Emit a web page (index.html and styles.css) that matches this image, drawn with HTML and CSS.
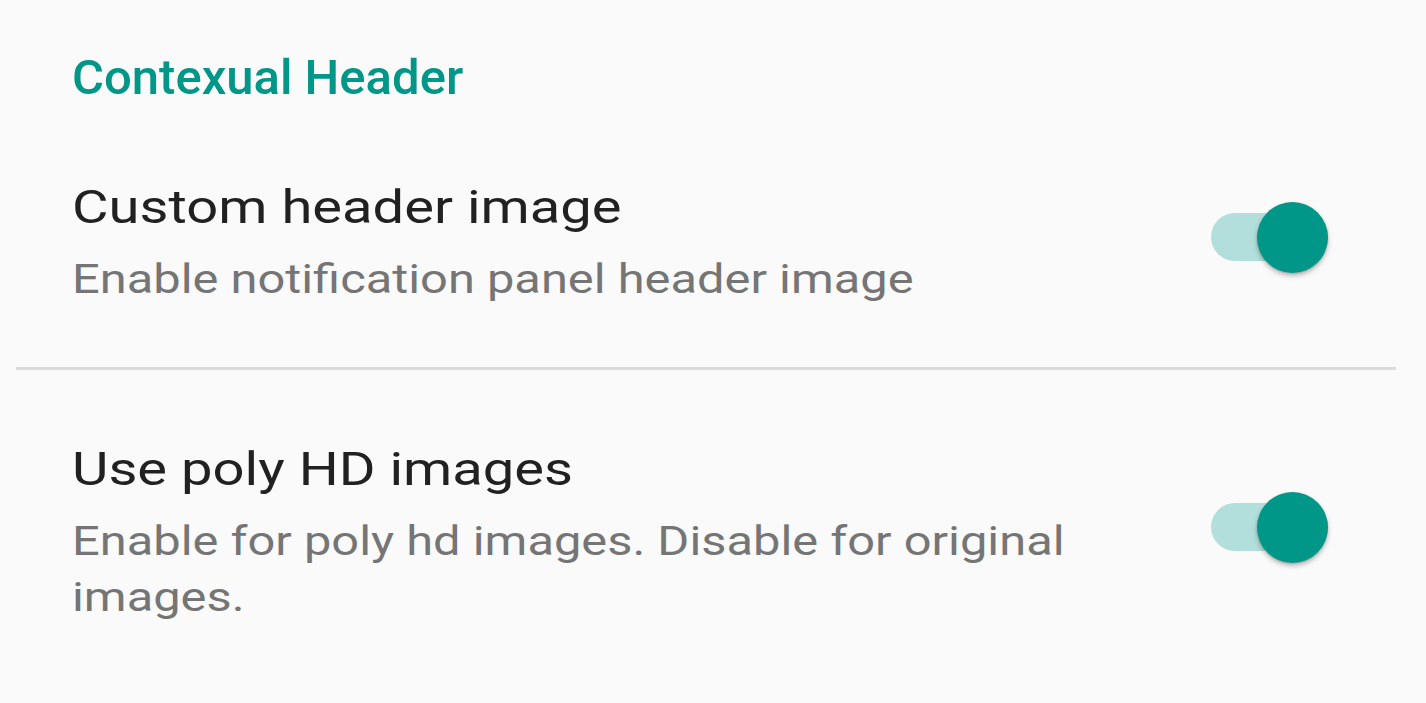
FILE: index.html
```html
<!DOCTYPE html>
<html>
<head>
<meta charset="utf-8">
<link rel="stylesheet" href="styles.css">
</head>
<body>
<div class="screen">
  <div class="category">Contexual Header</div>
  <div class="pref">
    <div class="pref-text">
      <div class="pref-title">Custom header image</div>
      <div class="pref-summary">Enable notification panel header image</div>
    </div>
    <div class="switch"><span class="track"></span><span class="thumb"></span></div>
  </div>
  <div class="divider"></div>
  <div class="pref">
    <div class="pref-text">
      <div class="pref-title">Use poly HD images</div>
      <div class="pref-summary">Enable for poly hd images. Disable for original images.</div>
    </div>
    <div class="switch"><span class="track"></span><span class="thumb"></span></div>
  </div>
</div>
</body>
</html>
```

FILE: styles.css
```css
html, body {
  margin: 0;
  padding: 0;
  background: #fafafa;
}
body {
  font-family: Roboto, "Noto Sans", sans-serif;
  width: 1426px;
  height: 703px;
  overflow: hidden;
}
.screen {
  display: flex;
  flex-direction: column;
}
.category {
  padding: 50px 0 0 72px;
  font-size: 49px;
  line-height: 56px;
  font-weight: 500;
  color: #009688;
}
.pref {
  display: flex;
  align-items: center;
  padding: 71px 98px 59px 72px;
}
.pref + .divider + .pref {
  padding-top: 69px;
  padding-bottom: 53px;
}
.pref-text {
  flex: 0 1 880px;
  transform: scaleX(1.22);
  transform-origin: left center;
}
.pref-title {
  font-size: 46px;
  line-height: 60px;
  color: #212121;
}
.pref-summary {
  margin-top: 15px;
  font-size: 40px;
  line-height: 56px;
  color: #757575;
}
.switch {
  position: relative;
  width: 117px;
  height: 71px;
  margin-left: auto;
  margin-bottom: 11px;
  flex-shrink: 0;
}
.track {
  position: absolute;
  left: 0;
  top: 11px;
  width: 117px;
  height: 48px;
  border-radius: 24px;
  background: #b2dfdb;
}
.thumb {
  position: absolute;
  right: 0;
  top: 0;
  width: 71px;
  height: 71px;
  border-radius: 50%;
  background: #009688;
  box-shadow: 0 3px 5px rgba(0, 0, 0, 0.25), 0 1px 2px rgba(0, 0, 0, 0.15);
}
.divider {
  height: 3px;
  margin: 0 30px 0 16px;
  background: #dcdcdc;
}
```
